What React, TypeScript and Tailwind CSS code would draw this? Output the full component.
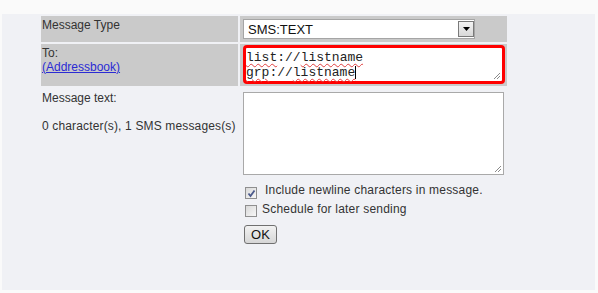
import React from "react";

const font = { fontFamily: '"Liberation Sans", Arial, sans-serif' };

function Checkbox({ checked }: { checked?: boolean }) {
  return (
    <div className="w-[12px] h-[12px] border border-[#8f8f8f] bg-gradient-to-br from-[#d9d9d9] to-[#f7f7f7] flex items-center justify-center shrink-0">
      {checked && (
        <svg width="9" height="9" viewBox="0 0 9 9">
          <path d="M1.5 4.5 L3.5 7 L7.5 1.5" fill="none" stroke="#4b5a8c" strokeWidth="1.8" />
        </svg>
      )}
    </div>
  );
}

function Grip() {
  return (
    <svg width="9" height="9" viewBox="0 0 9 9" className="absolute right-[1px] bottom-[1px]">
      <path d="M8 2 L2 8 M8 5 L5 8" stroke="#8a8a8a" strokeWidth="1" />
    </svg>
  );
}

const wavy = "underline decoration-wavy decoration-[#e04040] decoration-1 underline-offset-2";

export default function App() {
  return (
    <div className="w-[598px] h-[293px] bg-[#fafafa] pt-[14px] pl-[2px] text-[#333333]" style={font}>
      <div className="w-[593px] h-[276px] bg-[#f0f1f5] pt-[2px] pl-[39px]">
        <div className="grid grid-cols-[197px_267px] gap-[2px]">
          <div className="h-[26px] bg-[#cacaca] pl-[1px] pt-[2px] text-[12px] leading-[14px]">Message Type</div>
          <div className="h-[26px] bg-[#cacaca] pl-[3px] pt-[3px]">
            <div className="w-[232px] h-[20px] bg-white border border-[#a5a5a5] flex items-start justify-between">
              <span className="pl-[4px] pt-[2px] text-[13px] leading-[15px] text-[#111]">SMS:TEXT</span>
              <div className="w-[16px] h-[16px] mt-[1px] border border-[#7a7a7a] bg-gradient-to-b from-[#f4f4f4] to-[#d8d8d8] flex items-center justify-center">
                <svg width="7" height="4" viewBox="0 0 7 4">
                  <path d="M0 0 H7 L3.5 4 Z" fill="#000" />
                </svg>
              </div>
            </div>
          </div>
          <div className="h-[42px] bg-[#cacaca] pl-[1px] pt-[2px] text-[12px] leading-[14px]">
            <div>To:</div>
            <a href="#" className="text-[#2b2bd4] underline">(Addressbook)</a>
          </div>
          <div className="h-[42px] bg-[#cacaca] pl-[3px] pt-[1px]">
            <div className="relative w-[262px] h-[39px] bg-white border-[3px] border-[#ff0000] rounded-[4px] pt-[2px] text-[13px] leading-[15px] text-[#222]" style={{ fontFamily: '"Liberation Mono", "Courier New", monospace' }}>
              <div>
                <span className={wavy}>list</span>://<span className={wavy}>listname</span>
              </div>
              <div className="flex items-start">
                <span className={wavy}>grp</span>://<span className={wavy}>listname</span>
                <span className="inline-block w-[1px] h-[13px] mt-[1px] bg-black" />
              </div>
              <Grip />
            </div>
          </div>
          <div className="pl-[1px] pt-[3px] text-[12px] leading-[14px] whitespace-nowrap">
            <div>Message text:</div>
            <div className="mt-[14px] tracking-[0.15px]">0 character(s), 1 SMS messages(s)</div>
          </div>
          <div className="pl-[3px] pt-[4px]">
            <div className="relative w-[261px] h-[83px] bg-white border border-[#a9a9a9]">
              <Grip />
            </div>
          </div>
        </div>
        <div className="ml-[204px] mt-[8px] text-[12px] leading-[14px]">
          <div className="flex items-start">
            <div className="mt-[4px]"><Checkbox checked /></div>
            <span className="ml-[8px] tracking-[0.2px]">Include newline characters in message.</span>
          </div>
          <div className="flex items-start mt-[3px]">
            <div className="mt-[3px]"><Checkbox /></div>
            <span className="ml-[5px] tracking-[0.2px]">Schedule for later sending</span>
          </div>
          <button className="mt-[8px] -ml-[1px] w-[33px] h-[19px] border border-[#707070] rounded-[3px] bg-gradient-to-b from-[#f2f2f2] to-[#d6d6d6] text-[13px] leading-[15px] text-[#111] flex items-center justify-center">
            OK
          </button>
        </div>
      </div>
    </div>
  );
}
